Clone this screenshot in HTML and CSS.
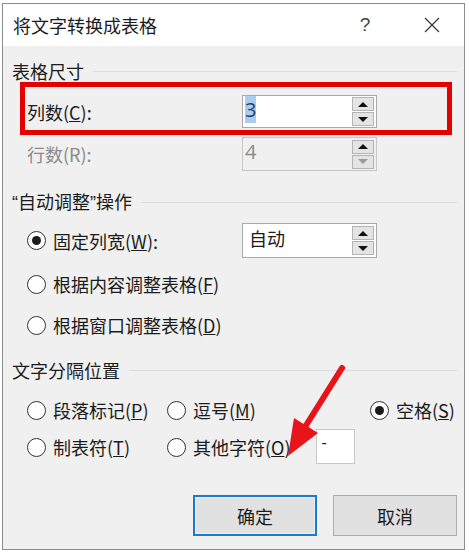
FILE: index.html
```html
<!DOCTYPE html>
<html lang="zh-CN">
<head>
<meta charset="utf-8">
<title>将文字转换成表格</title>
<link rel="stylesheet" href="styles.css">
</head>
<body>
<div class="dialog">
  <div class="titlebar">
    <span class="title">将文字转换成表格</span>
    <span class="help">?</span>
    <span class="close">
      <svg width="16" height="16" viewBox="0 0 16 16"><path d="M1 1L15 15M15 1L1 15" stroke="#333" stroke-width="1.2" fill="none"/></svg>
    </span>
  </div>
  <div class="body">
    <div class="group-head g1"><span>表格尺寸</span><i class="rule"></i></div>
    <div class="highlight">
      <div class="field-row">
        <span class="label">列数(<u>C</u>):</span>
        <div class="spin">
          <span class="spin-val"><span class="sel">3</span></span>
          <span class="spin-btns"><span class="sb"><i class="tri up"></i></span><span class="sb"><i class="tri down"></i></span></span>
        </div>
      </div>
    </div>
    <div class="field-row row2">
      <span class="label disabled">行数(R):</span>
      <div class="spin spin-disabled">
        <span class="spin-val">4</span>
        <span class="spin-btns"><span class="sb"><i class="tri up"></i></span><span class="sb"><i class="tri down dim"></i></span></span>
      </div>
    </div>

    <div class="group-head g2"><span><span class="q">“</span>自动调整<span class="q">”</span>操作</span><i class="rule"></i></div>
    <div class="radio-row first">
      <span class="radio checked"></span><span class="rlabel">固定列宽(<u>W</u>):</span>
      <div class="spin spin-auto">
        <span class="spin-val cjk">自动</span>
        <span class="spin-btns"><span class="sb"><i class="tri up"></i></span><span class="sb"><i class="tri down"></i></span></span>
      </div>
    </div>
    <div class="radio-row"><span class="radio"></span><span class="rlabel">根据内容调整表格(<u>F</u>)</span></div>
    <div class="radio-row"><span class="radio"></span><span class="rlabel">根据窗口调整表格(<u>D</u>)</span></div>

    <div class="group-head g3"><span>文字分隔位置</span><i class="rule"></i></div>
    <div class="sep-grid">
      <div class="opt"><span class="radio"></span><span class="rlabel">段落标记(<u>P</u>)</span></div>
      <div class="opt"><span class="radio"></span><span class="rlabel">逗号(<u>M</u>)</span></div>
      <div class="opt"><span class="radio checked"></span><span class="rlabel">空格(<u>S</u>)</span></div>
      <div class="opt tall"><span class="radio"></span><span class="rlabel">制表符(<u>T</u>)</span></div>
      <div class="opt tall"><span class="radio"></span><span class="rlabel">其他字符(<u>O</u>)</span><span class="charbox">-</span></div>
      <div class="opt tall"></div>
    </div>

    <div class="buttons">
      <button class="btn default">确定</button>
      <button class="btn">取消</button>
    </div>
  </div>
</div>
<svg class="arrow" width="469" height="552" viewBox="0 0 469 552">
  <line x1="342" y1="368" x2="305" y2="427" stroke="#e8141b" stroke-width="6" stroke-linecap="round"/>
  <polygon points="288,456 294,418 318,433" fill="#e8141b"/>
</svg>
</body>
</html>
```
FILE: styles.css
```css
html, body {
  margin: 0;
  padding: 0;
  background: #ffffff;
}
body {
  font-family: "Noto Sans CJK SC", "Noto Sans", sans-serif;
  color: #1b1b1b;
  font-size: 18px;
}
.dialog {
  box-sizing: border-box;
  margin: 3px 0 0 2px;
  width: 463px;
  height: 547px;
  border: 1px solid #8c8c8c;
  background: #f0f0f0;
  display: flex;
  flex-direction: column;
}
.titlebar {
  height: 42px;
  background: #ffffff;
  display: flex;
  align-items: center;
  padding-left: 10px;
}
.title {
  flex: 1;
  font-size: 18px;
  line-height: 42px;
  color: #1b1b1b;
}
.help {
  width: 20px;
  text-align: center;
  font-family: "Liberation Sans", sans-serif;
  font-size: 19px;
  color: #444;
  margin-right: 34px;
}
.close {
  width: 46px;
  display: flex;
  justify-content: center;
  margin-right: 9px;
}
.body {
  padding: 0 7px 12px 9px;
  display: flex;
  flex-direction: column;
}
.group-head {
  height: 20px;
  display: flex;
  align-items: center;
  gap: 9px;
  line-height: 20px;
  font-size: 18px;
}
.group-head .q {
  font-family: "Liberation Sans", sans-serif;
}
.group-head .rule {
  flex: 1;
  height: 1px;
  background: #dcdcdc;
}
.g1 { margin-top: 15px; }
.g2 { margin-top: 21px; }
.g3 { margin-top: 20px; }
.highlight {
  margin: 1px 5px 0 8px;
  height: 53px;
  box-sizing: border-box;
  border: 5px solid #e50000;
  padding: 8px 0 2px 2px;
}
.field-row {
  display: flex;
  align-items: center;
}
.row2 {
  margin-top: 2px;
  padding-left: 15px;
}
.label {
  width: 215px;
  line-height: 24px;
}
.label.disabled { color: #8a8a8a; }
.spin {
  box-sizing: border-box;
  width: 135px;
  height: 33px;
  border: 1px solid #a9a9a9;
  background: #ffffff;
  display: flex;
  align-items: center;
}
.spin-disabled {
  height: 34px;
  background: #f0f0f0;
  border-color: #c6c6c6;
  color: #8a8a8a;
}
.spin-val {
  flex: 1;
  padding-left: 2px;
  font-family: "Open Sans", "Noto Sans", sans-serif;
  font-size: 20px;
  line-height: 26px;
  align-self: flex-start;
  margin-top: 1px;
}
.spin-val.cjk {
  font-family: "Noto Sans CJK SC", sans-serif;
  font-size: 18px;
  padding-left: 6px;
}
.sel {
  background: #a9cdef;
  color: #29406b;
}
.spin-btns {
  width: 22px;
  margin-right: 2px;
  display: flex;
  flex-direction: column;
  gap: 1px;
}
.sb {
  box-sizing: border-box;
  height: 14px;
  background: #e4e4e4;
  border: 1px solid #b4b4b4;
  display: flex;
  align-items: center;
  justify-content: center;
}
.tri {
  width: 0;
  height: 0;
  border-left: 5px solid transparent;
  border-right: 5px solid transparent;
}
.tri.up { border-bottom: 5px solid #111; }
.tri.down { border-top: 5px solid #111; }
.tri.down.dim { border-top-color: #9a9a9a; }
.radio-row {
  display: flex;
  align-items: center;
  height: 30px;
  padding-left: 15px;
  margin-top: 11px;
}
.radio-row.first {
  height: 35px;
}
.radio-row.first .rlabel {
  width: 189px;
}
.radio-row.first .spin {
  height: 35px;
}
.radio {
  box-sizing: border-box;
  width: 19px;
  height: 19px;
  border: 1px solid #333;
  border-radius: 50%;
  background: #ffffff;
  display: flex;
  align-items: center;
  justify-content: center;
  flex: none;
}
.radio.checked::after {
  content: "";
  width: 9px;
  height: 9px;
  border-radius: 50%;
  background: #1b1b1b;
}
.rlabel {
  margin-left: 7px;
  line-height: 24px;
  white-space: nowrap;
}
.sep-grid {
  margin-top: 15px;
  padding-left: 15px;
  display: grid;
  grid-template-columns: 140px 203px 1fr;
  grid-template-rows: 30px 36px;
  row-gap: 4px;
}
.opt {
  display: flex;
  align-items: center;
}
.charbox {
  box-sizing: border-box;
  width: 39px;
  height: 35px;
  margin-left: 25px;
  background: #ffffff;
  border: 1px solid #c8c8c8;
  font-family: "Liberation Sans", sans-serif;
  font-size: 16px;
  line-height: 20px;
  padding: 3px 0 0 5px;
  align-self: flex-start;
}
.buttons {
  margin-top: 30px;
  display: flex;
  justify-content: flex-end;
  gap: 16px;
}
.btn {
  box-sizing: border-box;
  width: 124px;
  height: 41px;
  background: #e1e1e1;
  border: 1px solid #adadad;
  font-family: "Noto Sans CJK SC", sans-serif;
  font-size: 18px;
  color: #1b1b1b;
  padding: 0;
}
.btn.default {
  border: 2px solid #1e7ac8;
  box-shadow: inset 0 0 0 1px #e8f1fa;
}
.arrow {
  position: absolute;
  left: 0;
  top: 0;
  pointer-events: none;
}
```
